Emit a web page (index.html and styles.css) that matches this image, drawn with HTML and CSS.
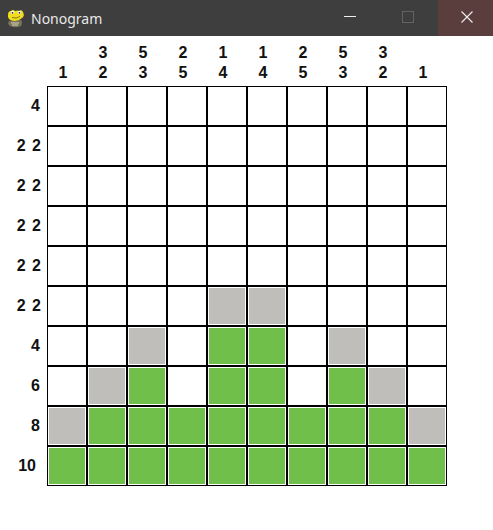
FILE: index.html
```html
<!DOCTYPE html>
<html>
<head>
    <meta charset="UTF-8">
    <title>Nonogram</title>
    <link rel="stylesheet" href="styles.css">
</head>
<body>
    <div class="titlebar">
        <svg class="appicon" width="18" height="20" viewBox="0 0 18 20">
            <path d="M2 13 Q0 16 3 18 Q9 20.5 14 18 Q16 15 14 12 Z" fill="#77745c"/>
            <path d="M4 15 H12 M5 17 H11" stroke="#d8d4b8" stroke-width="1"/>
            <path d="M1 7 Q1 3 4 3 Q6 1 8 3 Q11 2 12 3 Q15 1 16 4 Q18 8 15 10 Q12 13 8 13 Q2 13 1 9 Z" fill="#f2dc1e"/>
            <circle cx="5.5" cy="4.5" r="1.7" fill="#fff"/>
            <circle cx="12.5" cy="4.5" r="1.7" fill="#fff"/>
            <circle cx="5.5" cy="4.8" r="0.9" fill="#222"/>
            <circle cx="12.5" cy="4.8" r="0.9" fill="#222"/>
            <path d="M5 9.5 Q9 11 13 8.5" stroke="#8a7a10" stroke-width="1" fill="none"/>
        </svg>
        <span class="wintitle">Nonogram</span>
        <div class="controls">
            <div class="ctl"><svg width="12" height="12" viewBox="0 0 12 12"><path d="M0 5.5 H12" stroke="#eee" stroke-width="1"/></svg></div>
            <div class="ctl"><svg width="12" height="12" viewBox="0 0 12 12"><rect x="0.5" y="0.5" width="11" height="11" fill="none" stroke="#636363"/></svg></div>
            <div class="ctl close"><svg width="12" height="12" viewBox="0 0 12 12"><path d="M0.5 0.5 L11.5 11.5 M11.5 0.5 L0.5 11.5" stroke="#f0eeee" stroke-width="1.1"/></svg></div>
        </div>
    </div>

    <div class="board">
        <div></div>
        <div class="clue-top">1</div>
        <div class="clue-top">3<br>2</div>
        <div class="clue-top">5<br>3</div>
        <div class="clue-top">2<br>5</div>
        <div class="clue-top">1<br>4</div>
        <div class="clue-top">1<br>4</div>
        <div class="clue-top">2<br>5</div>
        <div class="clue-top">5<br>3</div>
        <div class="clue-top">3<br>2</div>
        <div class="clue-top">1</div>

        <div class="clue-left">4</div>
        <div class="cell"></div><div class="cell"></div><div class="cell"></div><div class="cell"></div><div class="cell"></div><div class="cell"></div><div class="cell"></div><div class="cell"></div><div class="cell"></div><div class="cell"></div>

        <div class="clue-left pair">2 2</div>
        <div class="cell"></div><div class="cell"></div><div class="cell"></div><div class="cell"></div><div class="cell"></div><div class="cell"></div><div class="cell"></div><div class="cell"></div><div class="cell"></div><div class="cell"></div>

        <div class="clue-left pair">2 2</div>
        <div class="cell"></div><div class="cell"></div><div class="cell"></div><div class="cell"></div><div class="cell"></div><div class="cell"></div><div class="cell"></div><div class="cell"></div><div class="cell"></div><div class="cell"></div>

        <div class="clue-left pair">2 2</div>
        <div class="cell"></div><div class="cell"></div><div class="cell"></div><div class="cell"></div><div class="cell"></div><div class="cell"></div><div class="cell"></div><div class="cell"></div><div class="cell"></div><div class="cell"></div>

        <div class="clue-left pair">2 2</div>
        <div class="cell"></div><div class="cell"></div><div class="cell"></div><div class="cell"></div><div class="cell"></div><div class="cell"></div><div class="cell"></div><div class="cell"></div><div class="cell"></div><div class="cell"></div>

        <div class="clue-left pair">2 2</div>
        <div class="cell"></div><div class="cell"></div><div class="cell"></div><div class="cell"></div><div class="cell grey"></div><div class="cell grey"></div><div class="cell"></div><div class="cell"></div><div class="cell"></div><div class="cell"></div>

        <div class="clue-left">4</div>
        <div class="cell"></div><div class="cell"></div><div class="cell grey"></div><div class="cell"></div><div class="cell green"></div><div class="cell green"></div><div class="cell"></div><div class="cell grey"></div><div class="cell"></div><div class="cell"></div>

        <div class="clue-left">6</div>
        <div class="cell"></div><div class="cell grey"></div><div class="cell green"></div><div class="cell"></div><div class="cell green"></div><div class="cell green"></div><div class="cell"></div><div class="cell green"></div><div class="cell grey"></div><div class="cell"></div>

        <div class="clue-left">8</div>
        <div class="cell grey"></div><div class="cell green"></div><div class="cell green"></div><div class="cell green"></div><div class="cell green"></div><div class="cell green"></div><div class="cell green"></div><div class="cell green"></div><div class="cell green"></div><div class="cell grey"></div>

        <div class="clue-left wide">10</div>
        <div class="cell green"></div><div class="cell green"></div><div class="cell green"></div><div class="cell green"></div><div class="cell green"></div><div class="cell green"></div><div class="cell green"></div><div class="cell green"></div><div class="cell green"></div><div class="cell green"></div>
    </div>
</body>
</html>
```

FILE: styles.css
```css
* {
    box-sizing: border-box;
}

body {
    margin: 0;
    background-color: #fff;
    font-family: "Liberation Sans", Arial, sans-serif;
}

.titlebar {
    display: flex;
    align-items: center;
    height: 36px;
    padding-left: 7px;
    background-color: #3e3e3e;
}

.appicon {
    margin-right: 6px;
}

.wintitle {
    flex: 1;
    color: #e8e8e8;
    font-family: "Noto Sans", sans-serif;
    font-size: 14px;
}

.controls {
    display: flex;
    height: 100%;
}

.ctl {
    display: flex;
    align-items: center;
    justify-content: center;
    width: 58px;
    height: 100%;
    padding-right: 2px;
    padding-bottom: 2px;
}

.close {
    width: 55px;
    padding-right: 0;
    padding-left: 3px;
    background-color: #5a3d3d;
}

.board {
    display: grid;
    grid-template-columns: 47px repeat(10, 40px);
    grid-template-rows: 50px repeat(10, 40px);
    color: #111;
    font-size: 16px;
    font-weight: bold;
}

.clue-top {
    align-self: end;
    padding-right: 8px;
    padding-bottom: 3px;
    line-height: 20px;
    text-align: center;
}

.clue-left {
    align-self: center;
    padding-right: 7px;
    text-align: right;
}

.pair {
    padding-right: 6px;
    word-spacing: 2px;
}

.wide {
    padding-right: 11px;
}

.cell {
    border: 1px solid #000;
    padding: 1px;
    background-clip: content-box;
}

.green {
    background-color: #6fbf4a;
}

.grey {
    background-color: #c0bebb;
}
```
